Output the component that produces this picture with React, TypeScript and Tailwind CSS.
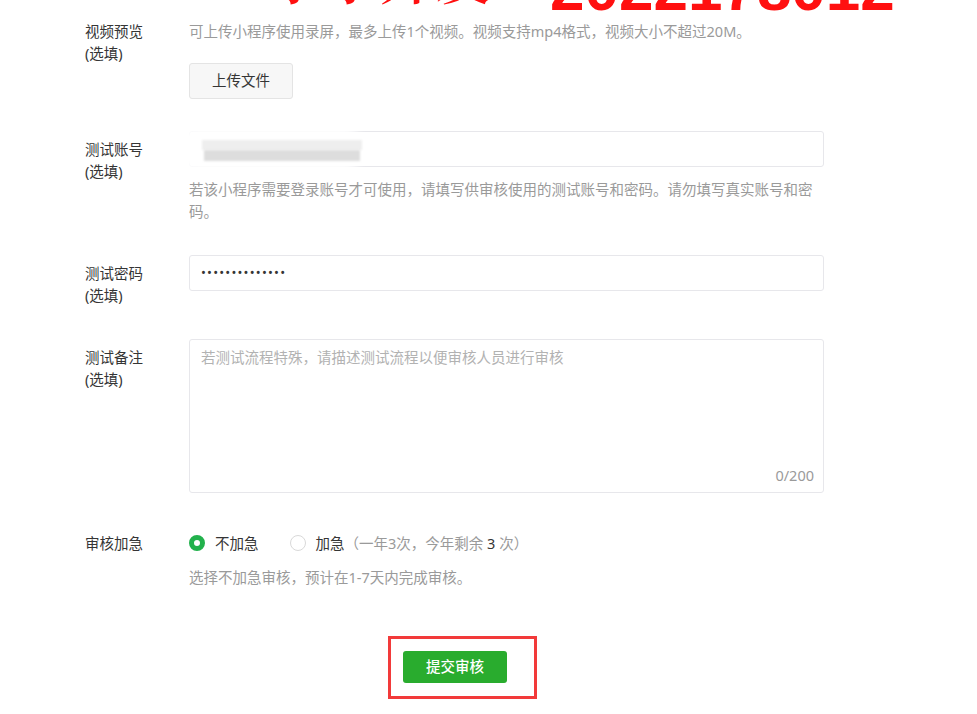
import React from "react";

const font = "font-['Noto_Sans','Noto_Sans_CJK_SC',sans-serif]";

function Label({ title, optional = true, pad = false }: { title: string; optional?: boolean; pad?: boolean }) {
  return (
    <div className={`w-[104px] shrink-0 text-[14.5px] leading-[22px] text-[#353535] ${pad ? "pt-[7px]" : ""}`}>
      <div>{title}</div>
      {optional && <div>(选填)</div>}
    </div>
  );
}

function Radio({ checked }: { checked?: boolean }) {
  if (checked) {
    return <span className="inline-block h-[16px] w-[16px] rounded-full border-[5px] border-[#22b14c] bg-white" />;
  }
  return <span className="inline-block h-[16px] w-[16px] rounded-full border border-[#d9d9d9] bg-white" />;
}

export default function App() {
  return (
    <div className={`relative h-[714px] w-[977px] overflow-hidden bg-white ${font}`}>
      {/* red annotation, cut off at the top */}
      <div className="absolute left-[268px] top-[-53px] whitespace-nowrap font-['Noto_Serif_CJK_SC','Noto_Sans_CJK_SC',serif] text-[56px] font-semibold leading-none text-[#ff1010]">
        于于开发
      </div>
      <div className="absolute left-[550px] top-[-42px] whitespace-nowrap font-['Liberation_Sans',sans-serif] text-[62px] font-bold leading-none text-[#ff1010]">
        2022178012
      </div>

      <div className="pl-[85px] pt-[20px]">
        {/* 视频预览 */}
        <div className="flex">
          <Label title="视频预览" />
          <div className="w-[635px]">
            <p className="text-[14.5px] leading-[22px] text-[#9a9a9a]">
              可上传小程序使用录屏，最多上传1个视频。视频支持mp4格式，视频大小不超过20M。
            </p>
            <button className="mt-[21px] h-[36px] w-[104px] rounded-[3px] border border-[#e4e4e4] bg-[#f7f7f7] text-[14.5px] text-[#353535]">
              上传文件
            </button>
          </div>
        </div>

        {/* 测试账号 */}
        <div className="mt-[32px] flex">
          <Label title="测试账号" pad />
          <div className="w-[635px]">
            <div className="relative h-[36px] rounded-[3px] border border-[#e7e7eb] bg-white">
              <div className="absolute left-[-16px] top-[-5px] h-[44px] w-[190px] rounded-full bg-white blur-[4px]" />
              <div className="absolute left-[12px] top-[8px] h-[10px] w-[160px] bg-[#eeeeee] blur-[1px]" />
              <div className="absolute left-[14px] top-[18px] h-[11px] w-[156px] bg-[#dddddd] blur-[1px]" />
            </div>
            <p className="mt-[11px] text-[14.5px] leading-[22px] text-[#9a9a9a]">
              若该小程序需要登录账号才可使用，请填写供审核使用的测试账号和密码。请勿填写真实账号和密码。
            </p>
          </div>
        </div>

        {/* 测试密码 */}
        <div className="mt-[33px] flex">
          <Label title="测试密码" pad />
          <div className="w-[635px]">
            <div className="flex h-[36px] items-center rounded-[3px] border border-[#e7e7eb] bg-white px-[11px]">
              <span className="text-[13px] tracking-[1.2px] text-[#353535]">••••••••••••••</span>
            </div>
          </div>
        </div>

        {/* 测试备注 */}
        <div className="mt-[33px] flex">
          <Label title="测试备注" pad />
          <div className="w-[635px]">
            <div className="relative h-[154px] rounded-[3px] border border-[#e7e7eb] bg-white px-[11px] pt-[6px]">
              <p className="text-[14.5px] leading-[22px] text-[#b2b2b2]">若测试流程特殊，请描述测试流程以便审核人员进行审核</p>
              <span className="absolute bottom-[6px] right-[9px] text-[14.5px] leading-[22px] text-[#9a9a9a]">0/200</span>
            </div>
          </div>
        </div>

        {/* 审核加急 */}
        <div className="mt-[39px] flex">
          <Label title="审核加急" optional={false} />
          <div className="w-[635px]">
            <div className="flex items-center text-[14.5px] leading-[22px]">
              <Radio checked />
              <span className="ml-[10px] text-[#353535]">不加急</span>
              <span className="ml-[31px] flex items-center">
                <Radio />
              </span>
              <span className="ml-[10px] text-[#353535]">加急</span>
              <span className="text-[#9a9a9a]">
                （一年3次，今年剩余 <span className="text-[#353535]">3</span> 次）
              </span>
            </div>
            <p className="mt-[12px] text-[14.5px] leading-[22px] text-[#9a9a9a]">
              选择不加急审核，预计在1-7天内完成审核。
            </p>
          </div>
        </div>

        {/* submit */}
        <div className="relative ml-[318px] mt-[63px] w-[104px]">
          <button className="h-[32px] w-[104px] rounded-[3px] bg-[#29ac2e] text-[14.5px] font-medium text-white">
            提交审核
          </button>
          <div className="absolute left-[-15px] top-[-15px] h-[63px] w-[149px] border-[3px] border-[#f23a3a]" />
        </div>
      </div>
    </div>
  );
}
